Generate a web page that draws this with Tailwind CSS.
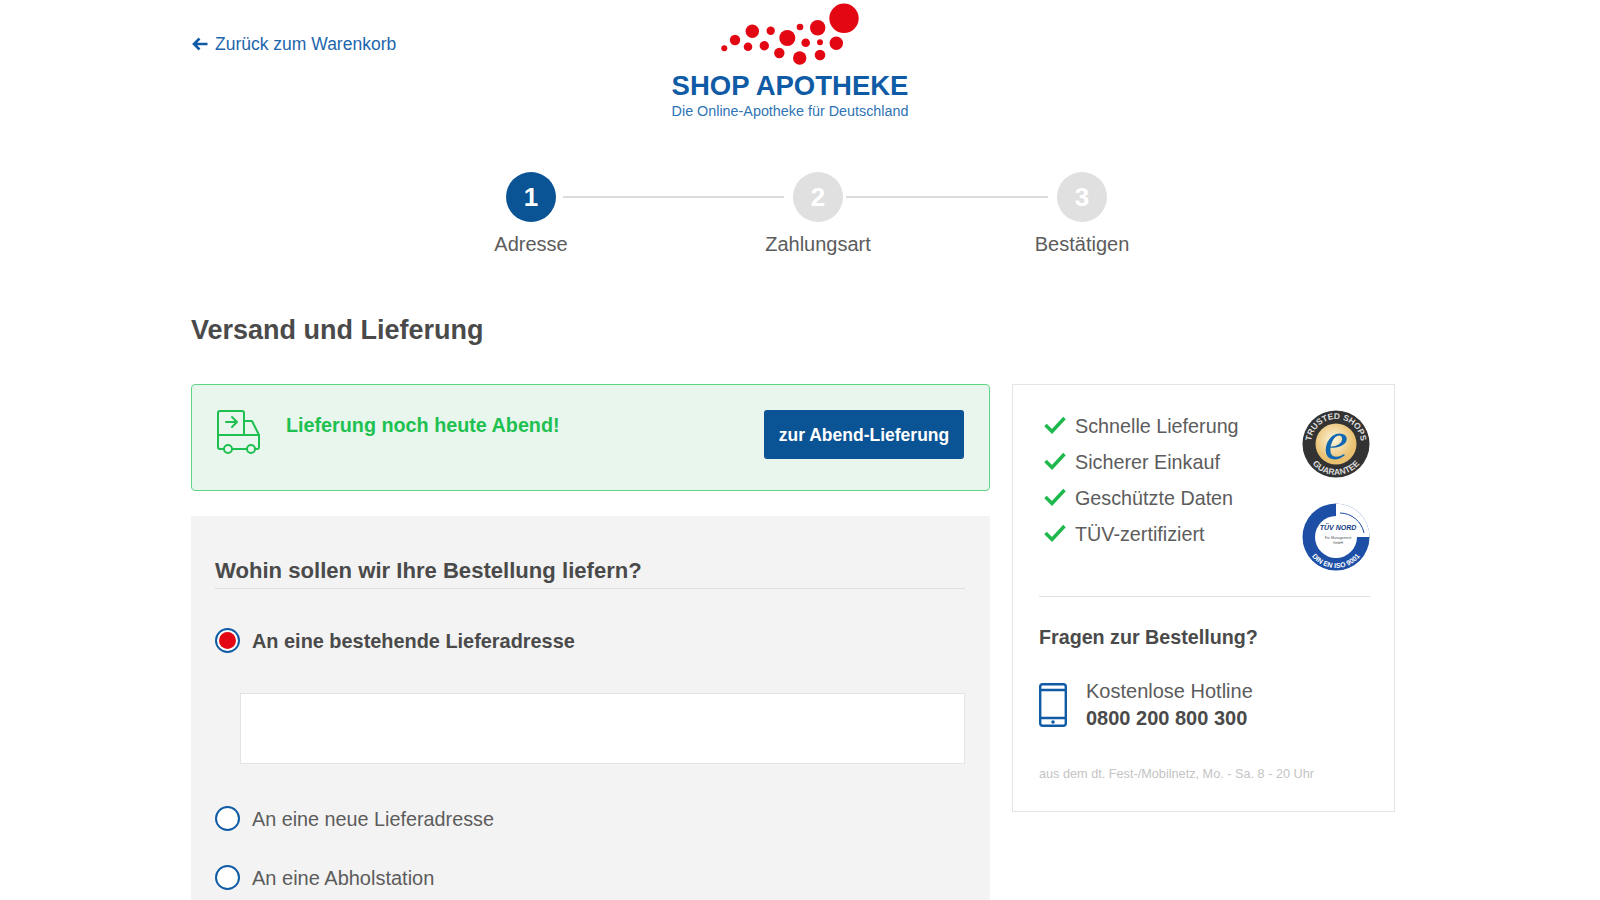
<!DOCTYPE html>
<html lang="de"><head><meta charset="utf-8"><title>Shop Apotheke</title>
<script src="https://cdn.jsdelivr.net/npm/@tailwindcss/browser@4"></script></head>
<body class="bg-white overflow-hidden h-[900px] font-['Liberation_Sans',Arial,sans-serif] text-[#4a4a4a]">
<div class="ml-[191px] w-[1204px]">
  <header class="relative h-[124px]">
    <a class="absolute left-[1px] top-[34px] flex items-center gap-[7px] text-[17.5px] leading-[20px] text-[#1d66ad]">
      <svg width="16" height="14" viewBox="0 0 16 14" fill="none" stroke="#0f5ba5" stroke-width="2.6"><path d="M15.500 7H2.500M7.500 1.500 2 7l5.500 5.500"/></svg>
      Zurück zum Warenkorb</a>
    <div class="absolute left-[481px] top-0 w-[236px] flex flex-col items-center">
      <svg class="absolute left-[-10px] top-0" width="260" height="70" viewBox="662 0 260 70" fill="#e30613">
        <circle cx="844" cy="18.300" r="14.700"/><circle cx="817.700" cy="27.700" r="7.700"/><circle cx="800" cy="27" r="3.300"/><circle cx="787.300" cy="38" r="8"/><circle cx="770.700" cy="30.700" r="4.200"/><circle cx="752.300" cy="31.300" r="6.700"/><circle cx="735" cy="40" r="5.200"/><circle cx="724.300" cy="48.300" r="3"/><circle cx="748" cy="46.700" r="4.300"/><circle cx="764.300" cy="45.700" r="4.700"/><circle cx="779.300" cy="53" r="5.200"/><circle cx="799.700" cy="58" r="6.700"/><circle cx="820" cy="55" r="5.300"/><circle cx="805.700" cy="42.700" r="4.300"/><circle cx="820" cy="42.300" r="3"/><circle cx="836.300" cy="43.300" r="6.700"/>
      </svg>
      <div class="mt-[70px] text-[27.500px] leading-[31px] font-bold text-[#0f5ba5] whitespace-nowrap">SHOP APOTHEKE</div>
      <div class="mt-[2px] text-[14.350px] leading-[16px] text-[#2f74b5] whitespace-nowrap">Die Online-Apotheke für Deutschland</div>
    </div>
  </header>
  <nav class="flex items-start ml-[315px] mt-[48px] h-[146px] text-[20px] leading-[24px] text-[#5c5c5c]">
    <div class="w-[50px] flex flex-col items-center"><span class="w-[50px] h-[50px] shrink-0 rounded-full bg-[#0a5394] text-white font-bold text-[26px] flex items-center justify-center">1</span><span class="mt-[10px] whitespace-nowrap">Adresse</span></div>
    <div class="w-[221px] h-[2px] bg-[#dcdcdc] mt-[24px] ml-[7px] mr-[9px]"></div>
    <div class="w-[50px] flex flex-col items-center"><span class="w-[50px] h-[50px] shrink-0 rounded-full bg-[#e0e0e0] text-white font-bold text-[26px] flex items-center justify-center">2</span><span class="mt-[10px] whitespace-nowrap">Zahlungsart</span></div>
    <div class="w-[202px] h-[2px] bg-[#dcdcdc] mt-[24px] ml-[3px] mr-[9px]"></div>
    <div class="w-[50px] flex flex-col items-center"><span class="w-[50px] h-[50px] shrink-0 rounded-full bg-[#e0e0e0] text-white font-bold text-[26px] flex items-center justify-center">3</span><span class="mt-[10px] whitespace-nowrap">Bestätigen</span></div>
  </nav>
  <h1 class="text-[27px] leading-[34px] font-bold text-[#4a4a4a] h-[71px] mt-[-5px]">Versand und Lieferung</h1>
  <div class="flex items-start gap-[22px]">
    <main class="w-[799px] shrink-0">
      <section class="h-[107px] border border-[#5fd685] rounded-[4px] bg-[#e8f6ee] flex items-start pl-[25px] pr-[25px] pt-[25px]">
        <svg width="44" height="44" viewBox="0 0 44 44" fill="none" stroke="#1ec14f" stroke-width="2" stroke-linecap="round" stroke-linejoin="round" class="shrink-0"><path d="M1 25V3a2 2 0 0 1 2-2h22a2 2 0 0 1 2 2v22"/><path d="M1 25h41M27 11h8l7 14v12a2 2 0 0 1-2 2h-2M1 25v12a2 2 0 0 0 2 2h4M15 39h15"/><circle cx="11" cy="39" r="4"/><circle cx="34" cy="39" r="4"/><path d="M9 12h10M15 7l5 5-5 5"/></svg>
        <p class="ml-[25px] mt-[3px] text-[19.750px] leading-[24px] font-bold text-[#1ec14f]">Lieferung noch heute Abend!</p>
        <button class="ml-auto w-[200px] h-[49px] pt-[1px] rounded-[3px] bg-[#0a5394] text-white font-bold text-[17.500px]">zur Abend-Lieferung</button>
      </section>
      <section class="mt-[25px] bg-[#f3f3f3] h-[384px] pl-[24px] pr-[25px]">
        <h2 class="pt-[42px] pb-[4px] text-[22.100px] leading-[26px] font-bold border-b border-[#dedede]">Wohin sollen wir Ihre Bestellung liefern?</h2>
        <div class="mt-[38px] flex items-center gap-[12px] text-[19.900px] leading-[24px] font-bold">
          <span class="w-[25px] h-[25px] rounded-full border-2 border-[#0f5ba5] bg-white flex items-center justify-center"><span class="w-[17px] h-[17px] rounded-full bg-[#e30613]"></span></span><span class="mt-[2px]">An eine bestehende Lieferadresse</span></div>
        <div class="ml-[25px] mt-[40px] h-[71px] bg-white border border-[#e4e4e4]"></div>
        <div class="mt-[41px] flex items-center gap-[12px] text-[19.800px] leading-[24px] text-[#5c5c5c]">
          <span class="w-[25px] h-[25px] rounded-full border-2 border-[#0f5ba5] bg-white"></span><span class="mt-[2px]">An eine neue Lieferadresse</span></div>
        <div class="mt-[33px] flex items-center gap-[12px] text-[20px] leading-[24px] text-[#5c5c5c]">
          <span class="w-[25px] h-[25px] rounded-full border-2 border-[#0f5ba5] bg-white"></span><span class="mt-[2px]">An eine Abholstation</span></div>
      </section>
    </main>
    <aside class="w-[383px] h-[428px] border border-[#e4e4e4] pl-[26px] pr-[24px] pt-[16px]">
      <div class="flex justify-between h-[196px] border-b border-[#e0e0e0]">
        <ul class="flex flex-col gap-[11px] pt-[13px] text-[19.750px] leading-[25px] text-[#5c5c5c]">
          <li class="flex items-center gap-[9px] pl-[5px]"><svg class="-mt-[3px]" width="22" height="18" viewBox="0 0 22 18" fill="none" stroke="#1eb84c" stroke-width="3.500"><path d="m1.500 9 6.500 6.500L20.500 2"/></svg>Schnelle Lieferung</li>
          <li class="flex items-center gap-[9px] pl-[5px]"><svg class="-mt-[3px]" width="22" height="18" viewBox="0 0 22 18" fill="none" stroke="#1eb84c" stroke-width="3.500"><path d="m1.500 9 6.500 6.500L20.500 2"/></svg>Sicherer Einkauf</li>
          <li class="flex items-center gap-[9px] pl-[5px]"><svg class="-mt-[3px]" width="22" height="18" viewBox="0 0 22 18" fill="none" stroke="#1eb84c" stroke-width="3.500"><path d="m1.500 9 6.500 6.500L20.500 2"/></svg>Geschützte Daten</li>
          <li class="flex items-center gap-[9px] pl-[5px]"><svg class="-mt-[3px]" width="22" height="18" viewBox="0 0 22 18" fill="none" stroke="#1eb84c" stroke-width="3.500"><path d="m1.500 9 6.500 6.500L20.500 2"/></svg>TÜV-zertifiziert</li>
        </ul>
        <div class="flex flex-col gap-[25px] pt-[9px]">
          <svg width="68" height="68" viewBox="0 0 68 68">
            <defs><radialGradient id="g" cx="45%" cy="40%"><stop offset="0" stop-color="#fff6dc"/><stop offset="1" stop-color="#e8c070"/></radialGradient>
            <path id="tt" d="M9 34a25 25 0 0 1 50 0"/><path id="tb" d="M3 34a31 31 0 0 0 62 0"/></defs>
            <circle cx="34" cy="34" r="33.500" fill="#333"/><circle cx="34" cy="34" r="20.500" fill="url(#g)"/>
            <text font-family="Liberation Sans" font-size="8.500" font-weight="700" fill="#ddd"><textPath href="#tt" startOffset="50%" text-anchor="middle">TRUSTED SHOPS</textPath></text>
            <text font-family="Liberation Sans" font-size="8.500" font-weight="700" fill="#ddd"><textPath href="#tb" startOffset="50%" text-anchor="middle">GUARANTEE</textPath></text>
            <text x="34" y="49" text-anchor="middle" font-family="Liberation Serif" font-style="italic" font-size="54" fill="#1268b0">e</text>
          </svg>
          <svg width="68" height="68" viewBox="0 0 68 68">
            <defs><path id="tv" d="M3 34a31 31 0 0 0 62 0"/></defs>
            <circle cx="34" cy="34" r="33.500" fill="#1d4fa6"/><circle cx="34" cy="34" r="21" fill="#fff"/><path d="M34 0.500a33.500 33.500 0 0 1 33.500 33.500H34Z" fill="#fff"/><path d="M38 10a25 25 0 0 1 24 20" fill="none" stroke="#1d4fa6" stroke-width="1"/>
            <text x="36" y="27" text-anchor="middle" font-family="Liberation Sans" font-size="7" font-weight="700" font-style="italic" fill="#123a85">TÜV NORD</text>
            <text x="36" y="36" text-anchor="middle" font-family="Liberation Sans" font-size="3.500" fill="#555">Für Management</text>
            <text x="36" y="41" text-anchor="middle" font-family="Liberation Sans" font-size="3.500" fill="#555">GmbH</text>
            <text font-family="Liberation Sans" font-size="7" font-weight="700" fill="#fff"><textPath href="#tv" startOffset="50%" text-anchor="middle">DIN EN ISO 9001</textPath></text>
          </svg>
        </div>
      </div>
      <h3 class="mt-[28px] text-[19.700px] leading-[24px] font-bold">Fragen zur Bestellung?</h3>
      <div class="mt-[29px] flex items-center gap-[19px]">
        <svg width="28" height="44" viewBox="0 0 28 44" fill="none" stroke="#0f5ba5" stroke-width="2.400"><rect x="1.200" y="1.200" width="25.600" height="41.600" rx="2.500"/><path d="M1 7h26M1 35h26"/><circle cx="14" cy="39" r="1.800" fill="#0f5ba5" stroke="none"/></svg>
        <div class="text-[20px] leading-[27px]"><div class="text-[#5c5c5c]">Kostenlose Hotline</div><div class="font-bold">0800 200 800 300</div></div>
      </div>
      <p class="mt-[34px] text-[12.700px] leading-[16px] text-[#c4c4c4]">aus dem dt. Fest-/Mobilnetz, Mo. - Sa. 8 - 20 Uhr</p>
    </aside>
  </div>
</div>
</body></html>
